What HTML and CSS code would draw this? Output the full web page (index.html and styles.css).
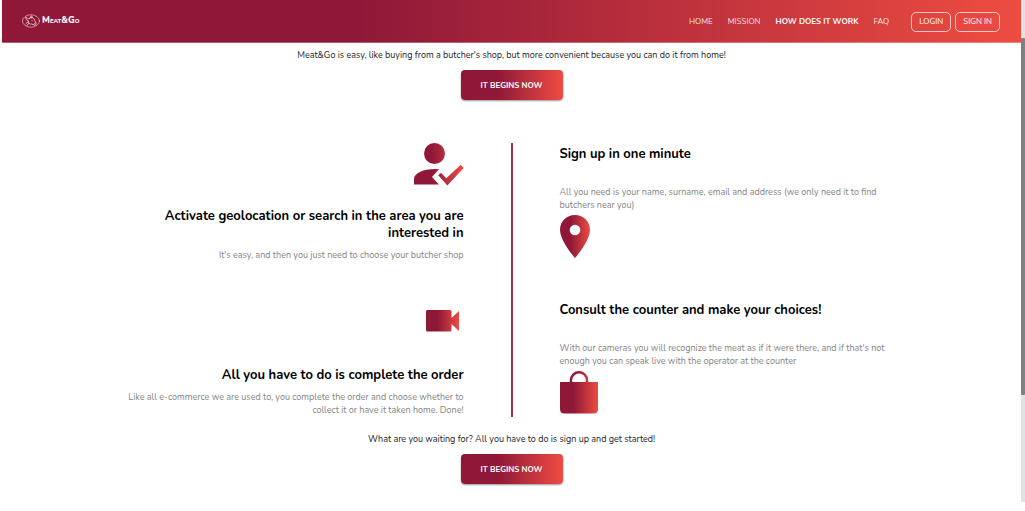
FILE: index.html
```html
<!DOCTYPE html>
<html lang="en">
<head>
<meta charset="utf-8">
<title>Meat&amp;Go</title>
<link rel="stylesheet" href="styles.css">
</head>
<body>
<div class="page">
  <header class="navbar">
    <a class="brand" href="#">
      <svg class="brand-mark" viewBox="0 0 36 28" fill="none" stroke="#fff" stroke-width="1.3" stroke-linecap="round" stroke-linejoin="round" aria-hidden="true">
        <ellipse cx="18" cy="14" rx="17" ry="12.5" stroke-width="1"/>
        <path d="M8 7c3 1 4 3 7 2 2-3 7-3 9 1l4 8c1 3-1 5-4 4l-5-2c-3 1-6-1-6-4l-1-3c-3 0-5-3-4-6M16 8c0-3 2-4 4-4 0 2 0 3-1 4M12 16l-4 3M13 19l-3 4M20 13l1 1M24 20l2-1"/>
      </svg>
      <span>Meat&amp;Go</span>
    </a>
    <nav class="links">
      <a href="#">HOME</a>
      <a href="#">MISSION</a>
      <a class="active" href="#">HOW DOES IT WORK</a>
      <a href="#">FAQ</a>
    </nav>
    <div class="account">
      <button class="outline">LOGIN</button>
      <button class="outline">SIGN IN</button>
    </div>
  </header>
  <main>
    <p class="lead">Meat&amp;Go is easy, like buying from a butcher's shop, but more convenient because you can do it from home!</p>
    <button class="cta">IT BEGINS NOW</button>
    <section class="steps">
      <div class="column left">
        <article class="step">
          <svg class="icon-user" viewBox="0 0 50 43" aria-hidden="true">
            <defs><linearGradient id="user-fill" gradientUnits="userSpaceOnUse" x1="0" y1="0" x2="50" y2="0"><stop offset=".35" stop-color="#8f1838"/><stop offset="1" stop-color="#ee4c41"/></linearGradient></defs>
            <g fill="url(#user-fill)"><circle cx="20.5" cy="10.5" r="10.5"/><path d="M0 41.500V36c0-6 10-10 20.500-10 1.500 0 3 .1 4.500.3L18 34l7 7.500zM24.300 32.300l2.700-2.500 5.300 5.400L46.700 21.700l3 3.300L33.300 42.500z"/></g>
          </svg>
          <h2>Activate geolocation or search in the area you are interested in</h2>
          <p>It's easy, and then you just need to choose your butcher shop</p>
        </article>
        <article class="step">
          <svg class="icon-camera" viewBox="0 0 38 22" aria-hidden="true">
            <defs><linearGradient id="camera-fill" gradientUnits="userSpaceOnUse" x1="0" y1="0" x2="33" y2="0"><stop offset=".35" stop-color="#8f1838"/><stop offset="1" stop-color="#ee4c41"/></linearGradient></defs>
            <path fill="url(#camera-fill)" d="M1.500 0h22.500q1.500 0 1.500 1.500V8L33 1v20l-7.500-7v6q0 1.500-1.500 1.500H1.500Q0 21.500 0 20V1.500Q0 0 1.500 0z"/>
          </svg>
          <h2>All you have to do is complete the order</h2>
          <p>Like all e-commerce we are used to, you complete the order and choose whether to collect it or have it taken home. Done!</p>
        </article>
      </div>
      <div class="divider"></div>
      <div class="column right">
        <article class="step">
          <h2>Sign up in one minute</h2>
          <p>All you need is your name, surname, email and address (we only need it to find butchers near you)</p>
          <svg class="icon-pin" viewBox="0 0 30 43" aria-hidden="true">
            <defs><linearGradient id="pin-fill"><stop offset=".35" stop-color="#8f1838"/><stop offset="1" stop-color="#ee4c41"/></linearGradient></defs>
            <path fill="url(#pin-fill)" fill-rule="evenodd" d="M15 0C6.500 0 0 6.600 0 15c0 11 15 28 15 28s15-17 15-28C30 6.600 23.500 0 15 0zm0 9.700a5.300 5.300 0 1 1 0 10.600 5.300 5.300 0 0 1 0-10.600z"/>
          </svg>
        </article>
        <article class="step">
          <h2>Consult the counter and make your choices!</h2>
          <p>With our cameras you will recognize the meat as if it were there, and if that's not enough you can speak live with the operator at the counter</p>
          <svg class="icon-bag" viewBox="0 0 38 43" aria-hidden="true">
            <defs><linearGradient id="bag-fill" gradientUnits="userSpaceOnUse" x1="0" y1="0" x2="38" y2="0"><stop offset=".35" stop-color="#8f1838"/><stop offset="1" stop-color="#ee4c41"/></linearGradient></defs>
            <path fill="url(#bag-fill)" d="M0 11h38v27q0 4.500-4.500 4.500h-29Q0 42.500 0 38z"/>
            <path fill="none" stroke="url(#bag-fill)" stroke-width="2.500" d="M11 12V9.200a8 8 0 0 1 16 0V12"/>
          </svg>
        </article>
      </div>
    </section>
    <p class="lead">What are you waiting for? All you have to do is sign up and get started!</p>
    <button class="cta">IT BEGINS NOW</button>
  </main>
</div>
<div class="scroll-track"><div class="scroll-thumb"></div></div>
</body>
</html>
```
FILE: styles.css
```css
* { box-sizing: border-box; }

body {
  margin: 0;
  padding-left: 2px;
  display: flex;
  align-items: flex-start;
  background: #fff;
  color: #212529;
  font: 9px/13px Nunito, Lato, sans-serif;
}

h2, p { margin: 0; }
svg { display: block; }
button { font-family: inherit; cursor: pointer; }

.page { flex: 1; }

.navbar {
  display: flex;
  align-items: center;
  height: 43px;
  padding: 1px 21px 0 20px;
  border-bottom: 1px solid rgba(255, 255, 255, 0.3);
  background: linear-gradient(90deg, #8f1838 35%, #ee4c41) border-box;
}

.brand {
  display: flex;
  align-items: center;
  gap: 2px;
  margin-right: auto;
  padding-bottom: 2px;
  color: #fff;
  font-size: 9px;
  font-weight: 800;
  font-variant: small-caps;
  text-decoration: none;
}

.brand-mark { width: 18px; height: 14px; }

.links { display: flex; gap: 15px; margin-right: 22px; }

.links a { color: rgba(255, 255, 255, 0.9); font-size: 8px; text-decoration: none; }

.links .active { color: #fff; font-weight: 700; }

.account { display: flex; gap: 4px; }

.outline {
  height: 20px;
  padding: 0 7px;
  border: 1px solid rgba(255, 255, 255, 0.7);
  border-radius: 5px;
  background: transparent;
  color: #fff;
  font-size: 8px;
}

main {
  display: flex;
  flex-direction: column;
  align-items: center;
  padding-top: 6px;
}

.cta {
  width: 102px;
  height: 30px;
  margin-top: 8px;
  border: 0;
  border-radius: 4px;
  background: linear-gradient(90deg, #8f1838 35%, #ee4c41);
  box-shadow: 0 1px 2px rgba(0, 0, 0, 0.4);
  color: #fff;
  font-size: 8px;
  font-weight: 700;
}

.steps {
  display: grid;
  grid-template-columns: 1fr 2px 1fr;
  gap: 47px;
  width: 76%;
  margin: 43px 0 16px;
}

.divider { background: #a3324f; }

.column {
  display: flex;
  flex-direction: column;
  justify-content: space-between;
  gap: 38px;
}

.step { display: flex; flex-direction: column; }

.step h2 { color: #000; font-size: 13px; line-height: 17px; font-weight: 700; }

.step p { color: #858585; }

.left { text-align: right; }
.left .step { align-items: flex-end; }
.left p { margin-top: 7px; }

.right .step { padding: 3px 0; }
.right p { margin: 23px 0 3px; }

.icon-user { width: 50px; height: 43px; margin-bottom: 22px; }
.icon-camera { width: 38px; height: 22px; margin-bottom: 35px; }
.icon-pin { width: 30px; height: 43px; }
.icon-bag { width: 38px; height: 43px; }

.scroll-track {
  width: 4px;
  height: 502px;
  padding-top: 38px;
  background: #e2e2e2;
}

.scroll-thumb { height: 357px; border-radius: 1px; background: #808080; }
```
